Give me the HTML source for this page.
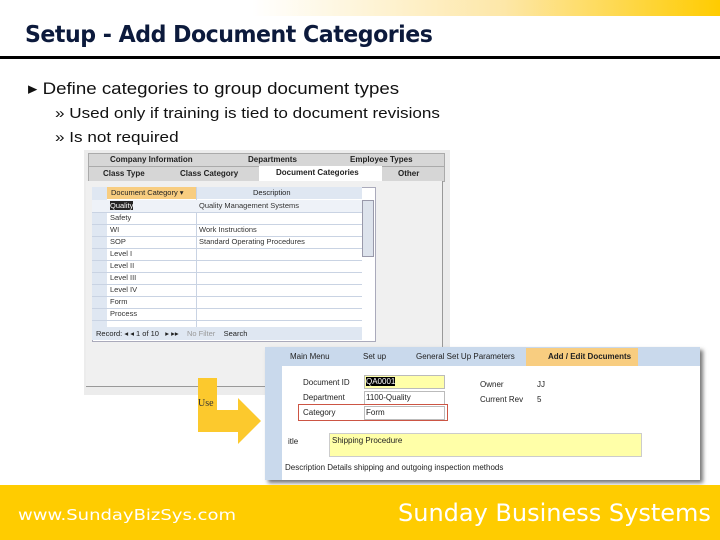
<!DOCTYPE html>
<html><head><meta charset="utf-8"><style>
body{margin:0;width:720px;height:540px;position:relative;overflow:hidden;background:#fff;font-family:"Liberation Sans",sans-serif}
.a{position:absolute}
.t{font-size:8px;color:#222;white-space:nowrap}
.row{position:absolute;left:92px;width:270px;height:12px;border-bottom:1px solid #c9d3e3}
.row span{position:absolute;top:1px;font-size:7.5px;color:#333}
</style></head><body>
<div class="a" style="left:0;top:0;width:720px;height:16px;background:linear-gradient(90deg,#fff 0%,#fff 35%,#fde7a8 70%,#ffcc00 100%)"></div>
<div class="a" style="left:25px;top:22px;font-size:23px;font-weight:bold;color:#0c1a3c;font-family:'DejaVu Sans',sans-serif;letter-spacing:-0.5px;transform:scaleX(0.96);transform-origin:left;white-space:nowrap">Setup - Add Document Categories</div>
<div class="a" style="left:0;top:56px;width:720px;height:3px;background:#000"></div>
<div class="a" style="left:28px;top:79px;font-size:17px;color:#111;transform:scaleX(1.1);transform-origin:left;white-space:nowrap">&#9656; Define categories to group document types</div>
<div class="a" style="left:55px;top:105px;font-size:15px;color:#111;transform:scaleX(1.14);transform-origin:left;white-space:nowrap">&#187; Used only if training is tied to document revisions</div>
<div class="a" style="left:55px;top:129px;font-size:15px;color:#111;transform:scaleX(1.14);transform-origin:left;white-space:nowrap">&#187; Is not required</div>

<!-- screenshot 1 -->
<div class="a" style="left:84px;top:150px;width:366px;height:245px;background:#ececec"></div>
<div class="a" style="left:88px;top:153px;width:355px;height:13px;background:#d6d6d6;border:1px solid #aaa"></div>
<div class="a t" style="left:110px;top:155px;font-weight:bold">Company Information</div>
<div class="a t" style="left:248px;top:155px;font-weight:bold">Departments</div>
<div class="a t" style="left:350px;top:155px;font-weight:bold">Employee Types</div>
<div class="a" style="left:88px;top:166px;width:355px;height:14px;background:#d6d6d6;border:1px solid #aaa"></div>
<div class="a" style="left:259px;top:166px;width:123px;height:15px;background:#fff"></div>
<div class="a t" style="left:103px;top:169px;font-weight:bold">Class Type</div>
<div class="a t" style="left:180px;top:169px;font-weight:bold">Class Category</div>
<div class="a t" style="left:276px;top:168px;font-weight:bold">Document Categories</div>
<div class="a t" style="left:398px;top:169px;font-weight:bold">Other</div>
<div class="a" style="left:86px;top:181px;width:356px;height:205px;background:#f0f0f0;border-right:1px solid #999;border-bottom:1px solid #999"></div>
<div class="a" style="left:92px;top:187px;width:282px;height:153px;background:#fff;border:1px solid #aab"></div>
<div class="a" style="left:92px;top:187px;width:270px;height:12px;background:#dfe7f2"></div>
<div class="a" style="left:107px;top:187px;width:89px;height:12px;background:#f8cd80"></div>
<div class="a t" style="left:111px;top:188px;font-size:7.5px">Document Category ▾</div>
<div class="a t" style="left:253px;top:188px;font-size:7.5px">Description</div>
<div class="a" style="left:92px;top:199px;width:15px;height:128px;background:#dfe7f2"></div>
<div class="a" style="left:196px;top:187px;width:1px;height:140px;background:#c9d3e3"></div>
<div class="row" style="top:200px;background:#eef2f8"><span style="left:18px;background:#222;color:#fff">Quality</span><span style="left:107px">Quality Management Systems</span></div>
<div class="row" style="top:212px"><span style="left:18px">Safety</span></div>
<div class="row" style="top:224px"><span style="left:18px">WI</span><span style="left:107px">Work Instructions</span></div>
<div class="row" style="top:236px"><span style="left:18px">SOP</span><span style="left:107px">Standard Operating Procedures</span></div>
<div class="row" style="top:248px"><span style="left:18px">Level I</span></div>
<div class="row" style="top:260px"><span style="left:18px">Level II</span></div>
<div class="row" style="top:272px"><span style="left:18px">Level III</span></div>
<div class="row" style="top:284px"><span style="left:18px">Level IV</span></div>
<div class="row" style="top:296px"><span style="left:18px">Form</span></div>
<div class="row" style="top:308px"><span style="left:18px">Process</span></div>
<div class="a" style="left:362px;top:200px;width:10px;height:55px;background:#dde3ec;border:1px solid #99a"></div>
<div class="a" style="left:92px;top:327px;width:270px;height:13px;background:#dfe7f2"></div>
<div class="a t" style="left:96px;top:329px;font-size:7.5px">Record: ◂ ◂ 1 of 10 &nbsp; ▸ ▸▸ &nbsp; &nbsp;<span style="color:#999">No Filter</span> &nbsp; &nbsp;Search</div>

<!-- arrow -->
<div class="a" style="left:198px;top:378px;width:19px;height:50px;background:#fcc92d"></div>
<div class="a" style="left:198px;top:410px;width:42px;height:22px;background:#fcc92d"></div>
<div class="a" style="left:238px;top:398px;width:0;height:0;border-top:23px solid transparent;border-bottom:23px solid transparent;border-left:23px solid #fcc92d"></div>
<div class="a" style="left:198px;top:398px;font-size:10px;font-family:'Liberation Serif',serif;color:#333">Use</div>

<!-- screenshot 2 -->
<div class="a" style="left:265px;top:347px;width:435px;height:133px;background:#fff;box-shadow:3px 3px 4px #777"></div>
<div class="a" style="left:265px;top:347px;width:435px;height:19px;background:#c9d9ec"></div>
<div class="a t" style="left:290px;top:352px">Main Menu</div>
<div class="a t" style="left:363px;top:352px">Set up</div>
<div class="a t" style="left:416px;top:352px">General Set Up Parameters</div>
<div class="a" style="left:526px;top:348px;width:112px;height:18px;background:#f8cd80"></div>
<div class="a t" style="left:548px;top:352px;font-weight:bold">Add / Edit Documents</div>
<div class="a" style="left:265px;top:366px;width:17px;height:114px;background:#c9d9ec"></div>
<div class="a t" style="left:303px;top:378px">Document ID</div>
<div class="a" style="left:364px;top:375px;width:79px;height:12px;background:#ffffa8;border:1px solid #bbb"></div>
<div class="a t" style="left:366px;top:377px;background:#000;color:#fff">QA0001</div>
<div class="a t" style="left:303px;top:393px">Department</div>
<div class="a" style="left:364px;top:391px;width:79px;height:12px;border:1px solid #bbb"></div>
<div class="a t" style="left:366px;top:393px">1100-Quality</div>
<div class="a" style="left:298px;top:404px;width:148px;height:15px;border:1.5px solid #c54"></div>
<div class="a t" style="left:303px;top:408px">Category</div>
<div class="a" style="left:364px;top:406px;width:79px;height:12px;border:1px solid #bbb"></div>
<div class="a t" style="left:366px;top:408px">Form</div>
<div class="a t" style="left:480px;top:380px">Owner</div>
<div class="a t" style="left:537px;top:380px">JJ</div>
<div class="a t" style="left:480px;top:395px">Current Rev</div>
<div class="a t" style="left:537px;top:395px">5</div>
<div class="a t" style="left:288px;top:437px">itle</div>
<div class="a" style="left:329px;top:433px;width:311px;height:22px;background:#ffffa8;border:1px solid #ccc"></div>
<div class="a t" style="left:332px;top:436px">Shipping Procedure</div>
<div class="a t" style="left:285px;top:463px">Description  Details shipping and outgoing inspection methods</div>

<!-- footer -->
<div class="a" style="left:0;top:485px;width:720px;height:55px;background:#ffcc00"></div>
<div class="a" style="left:18px;top:506px;font-size:15px;color:#fff;font-family:'DejaVu Sans',sans-serif;transform:scaleX(1.2);transform-origin:left;white-space:nowrap">www.SundayBizSys.com</div>
<div class="a" style="left:398px;top:499px;font-size:24px;color:#fff;font-family:'DejaVu Sans',sans-serif;transform:scaleX(1.0);transform-origin:left;white-space:nowrap">Sunday Business Systems</div>
</body></html>
